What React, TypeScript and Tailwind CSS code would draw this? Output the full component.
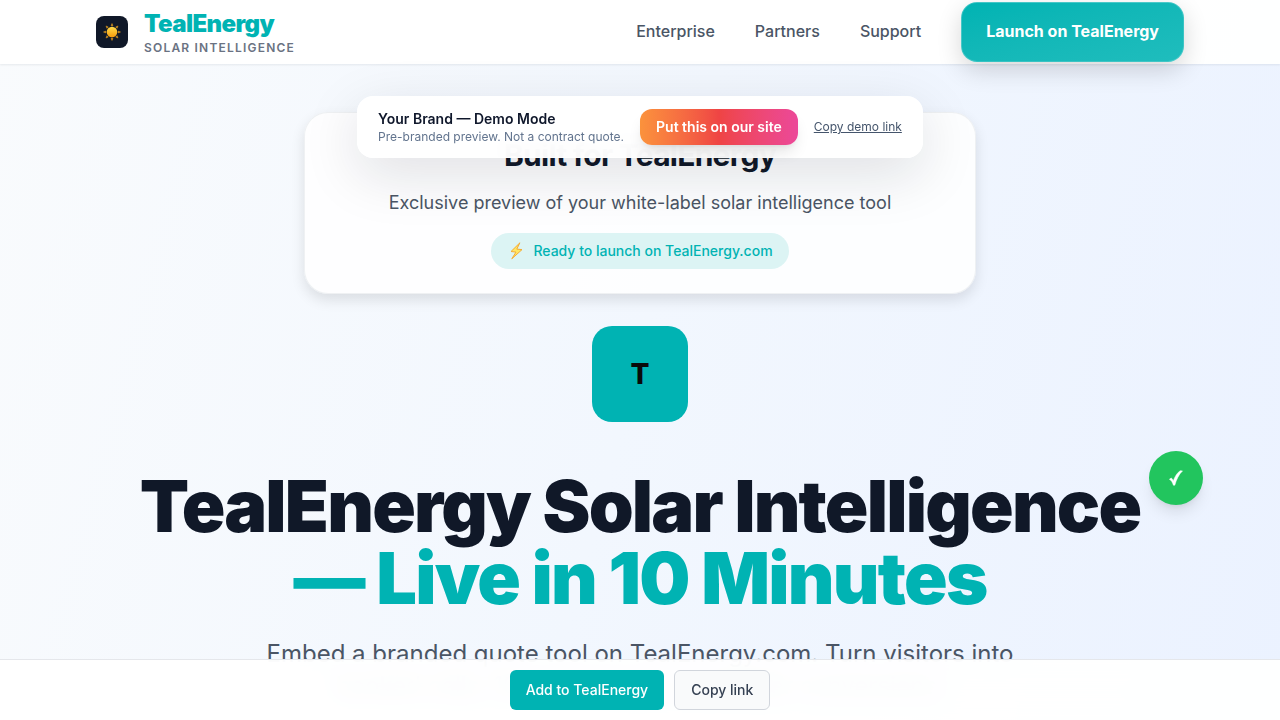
const navLinks = ["Enterprise", "Partners", "Support"];

const rays = [0, 45, 90, 135, 180, 225, 270, 315];

function SunIcon() {
  return (
    <svg viewBox="0 0 16 16" className="size-[18px]" aria-hidden="true">
      <defs>
        <linearGradient id="sun" x1="0" y1="0" x2="0" y2="1">
          <stop offset="0" stopColor="#ffdc4a" />
          <stop offset="1" stopColor="#f59a0c" />
        </linearGradient>
      </defs>
      {rays.map((angle) => (
        <path key={angle} d="M7.100 2.500 8 .4l.9 2.100Z" fill="#d9951f" stroke="#d9951f" strokeWidth=".4" transform={`rotate(${angle} 8 8)`} />
      ))}
      <circle cx="8" cy="8" r="4.700" fill="url(#sun)" />
    </svg>
  );
}

function BoltIcon() {
  return (
    <svg viewBox="0 0 18 18" className="size-[18px]" aria-hidden="true">
      <path
        d="M12.900 .8 4 9.500l5 .6L4.800 16.800 15 7.600l-5.200-.5Z"
        fill="#ffe763"
        stroke="#f5ab35"
        strokeWidth="1"
        strokeLinejoin="round"
      />
    </svg>
  );
}

function CheckIcon() {
  return (
    <svg viewBox="0 0 16 18" className="h-[18px] w-4" role="img" aria-label="Done">
      <path
        d="M1.400 10.300 3.200 9.100c.9.400 1.500 1.500 2 2.900C7 7.400 9.400 3.400 12.300 1.700l2.200.2C11 5.200 8.400 10.400 6.800 16.200H5.400C4.500 13.400 3.300 11.200 1.400 10.300Z"
        fill="#fff"
        stroke="#fff"
        strokeWidth=".5"
      />
    </svg>
  );
}

function Header() {
  return (
    <header className="sticky top-0 z-30 h-16 bg-white/95 shadow-[0_1px_2px_rgba(15,23,42,0.08)]">
      <div className="flex h-full items-center justify-between px-24">
        <a href="#" className="flex items-center gap-4">
          <span className="flex size-8 items-center justify-center rounded-lg bg-gray-900">
            <SunIcon />
          </span>
          <span className="flex flex-col">
            <span className="text-2xl font-black tracking-tight text-[#00b3b3]">TealEnergy</span>
            <span className="text-xs font-semibold tracking-widest text-gray-500 uppercase">Solar Intelligence</span>
          </span>
        </a>
        <nav className="flex items-center gap-10">
          {navLinks.map((label) => (
            <a key={label} href="#" className="pb-0.5 font-medium text-gray-600">
              {label}
            </a>
          ))}
          <button className="h-15 rounded-2xl border border-white/20 bg-linear-to-br from-[#00b3b3] to-[#1fbdbd] px-6 pb-0.5 font-bold text-white shadow-[0_8px_24px_rgba(0,0,0,0.16)]">
            Launch on TealEnergy
          </button>
        </nav>
      </div>
    </header>
  );
}

function DemoBar() {
  return (
    <div className="fixed inset-x-0 top-24 z-40 flex justify-center">
      <div className="flex items-center gap-4 rounded-2xl border border-white/50 bg-white/95 px-5 py-3 shadow-[0_16px_56px_rgba(15,23,42,0.13)] backdrop-blur-md">
        <div>
          <p className="text-sm font-semibold text-slate-900">Your Brand — Demo Mode</p>
          <p className="text-xs text-slate-500">Pre-branded preview. Not a contract quote.</p>
        </div>
        <button className="h-9 rounded-xl bg-linear-to-r from-[#fb923c] via-[#ef4444] to-[#ec4899] px-4 text-sm font-semibold text-white shadow-lg">
          Put this on our site
        </button>
        <a href="#" className="text-xs text-slate-600 underline">
          Copy demo link
        </a>
      </div>
    </div>
  );
}

function BottomBar() {
  return (
    <div className="fixed inset-x-0 bottom-0 z-40 flex justify-center gap-2.5 border-t border-gray-200 bg-white/95 py-2.5 backdrop-blur-md">
      <button className="h-10 rounded-md bg-[#00b3b3] px-4 text-sm font-medium text-white">Add to TealEnergy</button>
      <button className="h-10 rounded-md border border-gray-300 bg-gray-50 px-4 text-sm font-medium text-gray-700">
        Copy link
      </button>
    </div>
  );
}

export default function App() {
  return (
    <div className="min-h-screen bg-linear-105 from-[#f9fbfd] via-[#f2f7fe] to-[#ebf2ff] font-[Inter,sans-serif] antialiased">
      <Header />
      <DemoBar />
      <main className="flex flex-col items-center px-24 pt-12 pb-4 text-center">
        <section className="flex w-full max-w-[672px] flex-col items-center rounded-3xl border border-gray-200/60 bg-white/85 p-6 shadow-[0_6px_14px_rgba(0,0,0,0.11)]">
          <h2 className="text-3xl leading-9 font-bold tracking-tight text-gray-900">Built for TealEnergy</h2>
          <p className="mt-4 text-lg leading-7 text-gray-600">
            Exclusive preview of your white-label solar intelligence tool
          </p>
          <p className="mt-4 flex h-9 items-center gap-2 rounded-full bg-[#dcf4f4] px-4 text-sm font-medium text-[#00b3b3]">
            <BoltIcon />
            Ready to launch on TealEnergy.com
          </p>
        </section>
        <div className="mt-8 flex size-24 items-center justify-center rounded-[20px] bg-[#00b3b3] text-[28px] font-extrabold text-neutral-950">
          T
        </div>
        <div className="relative mt-12">
          <h1 className="text-7xl leading-none font-black tracking-tight text-gray-900">
            TealEnergy Solar Intelligence
            <span className="block text-[#00b3b3]">— Live in 10 Minutes</span>
          </h1>
          <span className="absolute -top-[19px] -right-[63px] flex size-[54px] items-center justify-center rounded-full bg-[#22c55e] shadow-lg">
            <CheckIcon />
          </span>
        </div>
        <p className="mt-6 max-w-3xl text-2xl leading-8 text-gray-600">
          Embed a branded quote tool on TealEnergy.com. Turn visitors into booked calls, 10x more leads, and better
          conversions.
        </p>
      </main>
      <BottomBar />
    </div>
  );
}
